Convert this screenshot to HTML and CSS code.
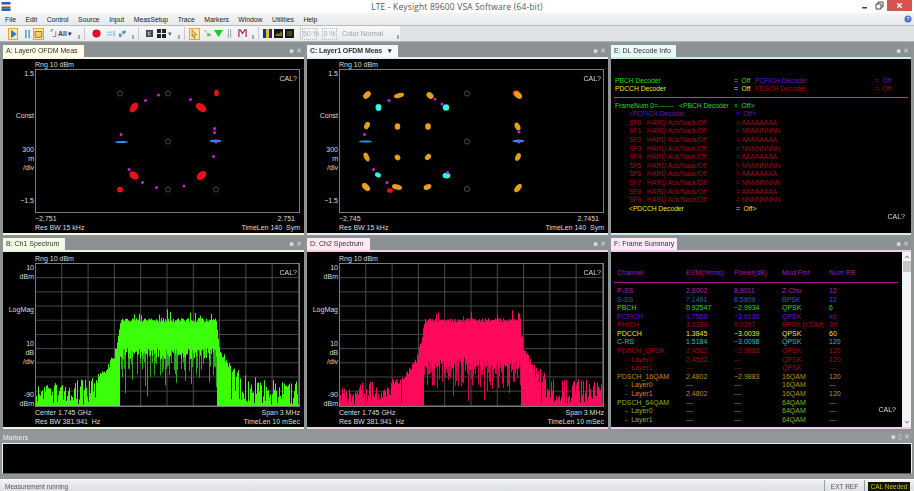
FILE: index.html
```html
<!DOCTYPE html>
<html lang="en">
<head>
<meta charset="utf-8">
<title>LTE - Keysight 89600 VSA Software (64-bit)</title>
<link rel="stylesheet" href="styles.css">
</head>
<body>
<div class="app">
  <header class="titlebar">
    <svg class="logo" viewBox="0 0 10 10"><rect width="10" height="3" fill="#2b5fa8"/><rect y="3" width="10" height="2" fill="#e8eef6"/><rect y="5" width="10" height="2" fill="#c8352c"/><rect y="7" width="10" height="3" fill="#2b5fa8"/></svg>
    <div class="title">LTE - Keysight 89600 VSA Software (64-bit)</div>
    <div class="winbtns">
      <svg class="winbtn" viewBox="0 0 14 11"><rect x="3" y="7" width="5" height="1.500" fill="#444"/></svg>
      <svg class="winbtn" viewBox="0 0 14 11"><path d="M3 4h5v5H3zM5 4V2h5v5H8" fill="none" stroke="#444"/></svg>
      <div class="closebtn"><svg viewBox="0 0 10 10"><path d="M2.500 2.500l5 5M7.500 2.500l-5 5" stroke="#fff" stroke-width="1.500"/></svg></div>
    </div>
  </header>

  <nav class="menubar">
    <span>File</span><span>Edit</span><span>Control</span><span>Source</span><span>Input</span><span>MeasSetup</span><span>Trace</span><span>Markers</span><span>Window</span><span>Utilities</span><span>Help</span>
    <svg class="help" viewBox="0 0 8 8"><circle cx="4" cy="4" r="3.500" fill="#4a6fd0"/><path d="M2.800 2.800q1.200-1 2.400 0L4 5" stroke="#fff" fill="none" stroke-width=".8"/></svg>
  </nav>

  <div class="toolbar">
    <div class="tools">
      <span class="tool hot"><svg viewBox="0 0 10 12"><path d="M2 1v10l7-5z" fill="#2c7fc8"/></svg></span>
      <span class="tool pause"><svg viewBox="0 0 8 12"><path d="M1 1h2v10H1zM5 1h2v10H5z" fill="#59a5d8"/></svg></span>
      <span class="tool hot wide"><svg viewBox="0 0 10 12"><path d="M1 3h8v7H1z" fill="#f4d068" stroke="#7c6a3a"/></svg></span>
      <svg class="ico sel" viewBox="0 0 8 12"><path d="M1 1h3M1 1v3M7 3v7H3" fill="none" stroke="#666"/></svg>
      <span class="tb-text">All</span><span class="drop">▾</span><span class="over"></span>
      <i class="sep"></i>
      <svg class="ico rec" viewBox="0 0 10 10"><circle cx="5" cy="5" r="4.500" fill="#e01020"/></svg>
      <svg class="ico mid" viewBox="0 0 10 10"><path d="M0 3h6v1H0zM0 6h6v1H0z" fill="#6aa8d8"/><path d="M7 2h2v6H7z" fill="#b8c0c8"/></svg>
      <svg class="ico mid" viewBox="0 0 10 10"><path d="M1 5h3v4H1zM4 3l4-2 1 3-3 2z" fill="#5f93c0"/></svg>
      <span class="over"></span>
      <i class="sep"></i>
      <svg class="ico box" viewBox="0 0 8 8"><rect width="8" height="8" fill="#444"/><path d="M5.500 2.500h-3v3h3" fill="none" stroke="#ddd"/></svg>
      <svg class="ico grid4" viewBox="0 0 9 9"><path d="M0 0h4v4H0zM5 0h4v4H5zM0 5h4v4H0zM5 5h4v4H5z" fill="#222"/></svg>
      <span class="drop small">▾</span><span class="over"></span>
      <i class="sep"></i>
      <span class="tool hot wide"><svg viewBox="0 0 10 12"><path d="M2 1l6 6H5l1 4-2 0-1-4-1 2z" fill="#f0d060" stroke="#8a7020" stroke-width=".7"/></svg></span>
      <svg class="ico mid" viewBox="0 0 9 10"><path d="M1 1l3 3" stroke="#888"/><path d="M4 5h4v3H4z" fill="#7ab070"/></svg>
      <svg class="ico mid" viewBox="0 0 10 10"><path d="M0 1h10L5 9z" fill="#1ec81e"/></svg>
      <svg class="ico thin" viewBox="0 0 6 10"><path d="M1 0h1v10H1zM4 0h1v10H4z" fill="#8a8f90"/></svg>
      <svg class="ico mid" viewBox="0 0 10 10"><path d="M1 9V1h1.500L5 5l2.500-4H9v8" fill="none" stroke="#b02838" stroke-width="1.300"/></svg>
      <span class="over"></span>
      <i class="sep"></i>
      <svg class="ico mid" viewBox="0 0 9 9"><rect width="9" height="9" fill="#1a2a90"/><path d="M3 0h3v9H3z" fill="#e0c020"/></svg>
      <svg class="ico mid" viewBox="0 0 9 9"><rect width="9" height="9" fill="#181818"/><path d="M1 7l2-3 2 1 3-3v5z" fill="#807818"/></svg>
      <svg class="ico mid" viewBox="0 0 9 9"><rect width="9" height="9" fill="#181810"/><path d="M2 2h5v5H2z" fill="#484818"/></svg>
      <i class="sep near"></i>
      <span class="pct first">50 %</span><span class="pct">0 %</span>
      <span class="colormode">Color Normal</span><span class="over end"></span>
    </div>
  </div>

  <main class="workspace">
    <section class="panel a">
      <div class="strip"><span class="tab">A: Layer0 OFDM Meas</span><span class="ctl">▪ ✕</span></div>
      <div class="body plot">
        <div class="toplabel">Rng 10 dBm</div>
        <div class="yaxis"><span>1.5</span><span class="g33">Const</span><span class="g25">300</span><span>m</span><span>/div</span><span class="g24">−1.5</span></div>
        <div class="frame" data-const="A"><span class="cal">CAL?</span></div>
        <div class="xaxis">
          <div class="xrow inset"><span>−2.751</span><span>2.751</span></div>
          <div class="xrow"><span>Res BW 15 kHz</span><span>TimeLen 140&nbsp; Sym</span></div>
        </div>
      </div>
    </section>

    <section class="panel c">
      <div class="strip"><span class="tab">C: Layer1 OFDM Meas<b class="tabdrop">▾</b></span><span class="ctl">▪ ✕</span></div>
      <div class="body plot">
        <div class="toplabel">Rng 10 dBm</div>
        <div class="yaxis"><span>1.5</span><span class="g33">Const</span><span class="g25">300</span><span>m</span><span>/div</span><span class="g24">−1.5</span></div>
        <div class="frame" data-const="C"><span class="cal">CAL?</span></div>
        <div class="xaxis">
          <div class="xrow inset"><span>−2.745</span><span>2.7451</span></div>
          <div class="xrow"><span>Res BW 15 kHz</span><span>TimeLen 140&nbsp; Sym</span></div>
        </div>
      </div>
    </section>

    <section class="panel e">
      <div class="strip"><span class="tab">E: DL Decode Info</span><span class="ctl">▪ ✕</span></div>
      <div class="body decode">
        <div class="dline"><span class="green c1">PBCH Decoder</span><span class="green eq">= &nbsp;Off</span><span class="purple c3">PCFICH Decoder</span><span class="purple">= &nbsp;Off</span></div>
        <div class="dline"><span class="yellow c1">PDCCH Decoder</span><span class="yellow eq">= &nbsp;Off</span><span class="red c3">PDSCH Decoder</span><span class="red">= &nbsp;Off</span></div>
        <hr class="teal">
        <div class="dline green"><span class="c1">FrameNum 0=------- &nbsp; &lt;PBCH Decoder</span><span class="eq">= &nbsp;Off&gt;</span></div>
        <div class="dline purple ind"><span class="c1b">&lt;PCFICH Decoder</span><span>= &nbsp;Off&gt;</span></div>
        <div class="dline red ind"><span class="c1b">SF0 &nbsp; HARQ Ack/Nack/Off</span><span>= AAAAAAAA</span></div>
        <div class="dline red ind"><span class="c1b">SF1 &nbsp; HARQ Ack/Nack/Off</span><span>= NNNNNNNN</span></div>
        <div class="dline red ind"><span class="c1b">SF2 &nbsp; HARQ Ack/Nack/Off</span><span>= AAAAAAAA</span></div>
        <div class="dline red ind"><span class="c1b">SF3 &nbsp; HARQ Ack/Nack/Off</span><span>= NNNNNNNN</span></div>
        <div class="dline red ind"><span class="c1b">SF4 &nbsp; HARQ Ack/Nack/Off</span><span>= AAAAAAAA</span></div>
        <div class="dline red ind"><span class="c1b">SF5 &nbsp; HARQ Ack/Nack/Off</span><span>= NNNNNNNN</span></div>
        <div class="dline red ind"><span class="c1b">SF6 &nbsp; HARQ Ack/Nack/Off</span><span>= AAAAAAAA</span></div>
        <div class="dline red ind"><span class="c1b">SF7 &nbsp; HARQ Ack/Nack/Off</span><span>= NNNNNNNN</span></div>
        <div class="dline red ind"><span class="c1b">SF8 &nbsp; HARQ Ack/Nack/Off</span><span>= AAAAAAAA</span></div>
        <div class="dline red ind"><span class="c1b">SF9 &nbsp; HARQ Ack/Nack/Off</span><span>= NNNNNNNN</span></div>
        <div class="dline yellow ind"><span class="c1b">&lt;PDCCH Decoder</span><span>= &nbsp;Off&gt;</span></div>
        <span class="cal">CAL?</span>
      </div>
    </section>

    <section class="panel b">
      <div class="strip"><span class="tab">B: Ch1 Spectrum</span><span class="ctl">▪ ✕</span></div>
      <div class="body plot">
        <div class="toplabel">Rng 10 dBm</div>
        <div class="yaxis"><span>10</span><span>dBm</span><span class="g24">LogMag</span><span class="g25">10</span><span>dB</span><span>/div</span><span class="g24">-90</span><span>dBm</span></div>
        <div class="frame gridded"><canvas class="trace" data-color="#3cff0a" data-dim="#2aa818" data-seed="7" data-floor="90" width="263" height="142"></canvas><span class="cal">CAL?</span></div>
        <div class="xaxis">
          <div class="xrow"><span>Center 1.745 GHz</span><span>Span 3 MHz</span></div>
          <div class="xrow"><span>Res BW 381.941&nbsp; Hz</span><span>TimeLen 10 mSec</span></div>
        </div>
      </div>
    </section>

    <section class="panel d">
      <div class="strip"><span class="tab">D: Ch2 Spectrum</span><span class="ctl">▪ ✕</span></div>
      <div class="body plot">
        <div class="toplabel">Rng 10 dBm</div>
        <div class="yaxis"><span>10</span><span>dBm</span><span class="g24">LogMag</span><span class="g25">10</span><span>dB</span><span>/div</span><span class="g24">-90</span><span>dBm</span></div>
        <div class="frame gridded"><canvas class="trace" data-color="#ff0a5c" data-dim="#d00a4c" data-seed="23" data-floor="100" width="263" height="142"></canvas><span class="cal">CAL?</span></div>
        <div class="xaxis">
          <div class="xrow"><span>Center 1.745 GHz</span><span>Span 3 MHz</span></div>
          <div class="xrow"><span>Res BW 381.941&nbsp; Hz</span><span>TimeLen 10 mSec</span></div>
        </div>
      </div>
    </section>

    <section class="panel f">
      <div class="strip"><span class="tab">F: Frame Summary</span><span class="ctl">▪ ✕</span></div>
      <div class="fbody">
        <div class="body summary">
          <div class="srow head"><span>Channel</span><span>EVM(%rms)</span><span>Power(dB)</span><span>Mod Fmt</span><span>Num RB</span></div>
          <hr class="mag">
          <div class="srow magenta"><span>P-SS</span><span>2.6002</span><span>8.9011</span><span>Z-Chu</span><span>12</span></div>
          <div class="srow blue"><span>S-SS</span><span>7.1491</span><span>8.5909</span><span>BPSK</span><span>12</span></div>
          <div class="srow green"><span>PBCH</span><span>0.92547</span><span>−2.9934</span><span>QPSK</span><span>6</span></div>
          <div class="srow purple"><span>PCFICH</span><span>1.7568</span><span>−3.0130</span><span>QPSK</span><span>40</span></div>
          <div class="srow red"><span>PHICH</span><span>1.1289</span><span>9.0297</span><span>BPSK (CDM)</span><span>30</span></div>
          <div class="srow yellow"><span>PDCCH</span><span>1.3845</span><span>−3.0039</span><span>QPSK</span><span>60</span></div>
          <div class="srow cyan"><span>C-RS</span><span>1.5184</span><span>−3.0098</span><span>QPSK</span><span>120</span></div>
          <div class="srow red"><span>PDSCH_QPSK</span><span>2.4582</span><span>−2.9883</span><span>QPSK</span><span>120</span></div>
          <div class="srow red"><span class="sub">-&nbsp; Layer0</span><span>2.4582</span><span>---</span><span>QPSK</span><span>120</span></div>
          <div class="srow red"><span class="sub">-&nbsp; Layer1</span><span>---</span><span>---</span><span>QPSK</span><span>---</span></div>
          <div class="srow orange"><span>PDSCH_16QAM</span><span>2.4802</span><span>−2.9883</span><span>16QAM</span><span>120</span></div>
          <div class="srow orange"><span class="sub">-&nbsp; Layer0</span><span>---</span><span>---</span><span>16QAM</span><span>---</span></div>
          <div class="srow orange"><span class="sub">-&nbsp; Layer1</span><span>2.4802</span><span>---</span><span>16QAM</span><span>120</span></div>
          <div class="srow olive"><span>PDSCH_64QAM</span><span>---</span><span>---</span><span>64QAM</span><span>---</span></div>
          <div class="srow olive"><span class="sub">-&nbsp; Layer0</span><span>---</span><span>---</span><span>64QAM</span><span>---</span></div>
          <div class="srow olive"><span class="sub">-&nbsp; Layer1</span><span>---</span><span>---</span><span>64QAM</span><span>---</span></div>
          <span class="cal">CAL?</span>
        </div>
        <div class="scrollbar">
          <svg viewBox="0 0 7 5"><path d="M1 4l2.500-3L6 4" fill="none" stroke="#555"/></svg>
          <i class="thumb"></i>
          <svg class="down" viewBox="0 0 7 5"><path d="M1 1l2.500 3L6 1" fill="none" stroke="#555"/></svg>
        </div>
      </div>
    </section>
  </main>

  <section class="markers">
    <div class="mstrip"><span>Markers</span><span class="ctl">▪ ▯ ✕</span></div>
    <div class="mbody"></div>
  </section>

  <footer class="status">
    <span class="stext">Measurement running</span>
    <span class="extref">EXT REF</span>
    <span class="calneed">CAL Needed</span>
  </footer>
</div>
<script src="plots.js"></script>
</body>
</html>
```
FILE: styles.css
```css
* { box-sizing: border-box; }
html, body { margin: 0; height: 100%; }
body { font-family: "Liberation Sans", Arial, sans-serif; background: #8f9495; overflow: hidden; }
.app { width: 914px; height: 491px; display: flex; flex-direction: column; background: #8f9495; filter: blur(.35px); }

/* Title bar */
.titlebar { height: 13px; background: #fff; display: flex; align-items: center; position: relative; flex: none; }
.logo { width: 10px; height: 9px; margin-left: 1px; }
.title { flex: 1; text-align: center; font: 8.400px "Open Sans", sans-serif; color: #555; padding-left: 44px; letter-spacing: .2px; }
.winbtns { display: flex; align-items: flex-start; height: 13px; margin-right: 2px; }
.winbtn { width: 14px; height: 11px; }
.closebtn { width: 25px; height: 11px; background: #d9534f; display: flex; align-items: center; justify-content: center; }
.closebtn svg { width: 9px; height: 9px; }

/* Menu */
.menubar { height: 13px; flex: none; display: flex; align-items: center; gap: 9.500px; padding: 0 2px 0 5px; font-size: 6.800px; color: #222; background: linear-gradient(#f3f4f5, #e7e9ea); border-bottom: 1px solid #b8bcbe; }
.help { width: 8px; height: 8px; margin-left: auto; }

/* Toolbar */
.toolbar { height: 16px; flex: none; background: #dfe2e4; border-bottom: 1px solid #aeb2b4; }
.tools { width: 400px; height: 15px; display: flex; align-items: center; padding-left: 8px; background: linear-gradient(#f7f8f9, #e9ebec); color: #333; }
.tool { width: 10px; height: 12px; display: flex; align-items: center; justify-content: center; margin-right: 4px; flex: none; }
.tool svg { width: 9px; height: 10px; }
.tool.pause { margin-right: 1px; }
.tool.hot { background: #fde9a9; outline: 1px solid #e2a93a; outline-offset: -1px; }
.tool.wide { width: 11px; margin-right: 3px; }
.ico { height: 9px; width: 9px; flex: none; margin-right: 2px; }
.ico.sel { width: 7px; margin-left: 3px; margin-right: 1px; }
.ico.rec { margin-left: 3px; margin-right: 6px; }
.ico.box { width: 7px; height: 7px; margin-left: 3px; margin-right: 4px; }
.ico.thin { width: 5px; margin: 0 6px 0 2px; }
.tb-text { font-size: 7px; width: 9px; font-weight: bold; color: #444; flex: none; }
.drop { font-size: 7px; width: 7px; margin-left: 1px; color: #222; flex: none; }
.drop.small { margin-left: 0; color: #666; }
.over { width: 2px; height: 4px; align-self: flex-end; margin: 0 3px 2px 3px; background: #a5a9ab; flex: none; }
.over.end { margin-left: 9px; }
.sep { width: 1px; height: 13px; background: #c8cccf; margin: 0 4px 0 1px; flex: none; }
.sep.near { margin: 0 1px 0 4px; }
.pct { font-size: 7px; height: 12px; line-height: 10px; width: 15px; text-align: center; color: #aaa; border: 1px dotted #bbb; flex: none; white-space: nowrap; }
.pct.first { margin-right: 5px; }
.colormode { font-size: 7px; color: #9a9ea0; margin-left: 5px; width: 46px; white-space: nowrap; flex: none; }

/* Workspace */
.workspace { flex: none; padding: 2px 3px 0; display: grid; grid-template-columns: 301px 301px 300px; grid-template-rows: 191px 192px; column-gap: 3px; row-gap: 2px; }
.panel { display: flex; flex-direction: column; min-width: 0; --accent: #fff; border-bottom: 2px solid var(--accent); }
.strip { height: 13px; flex: none; display: flex; justify-content: space-between; align-items: flex-end; background: #8c9293; }
.tab { height: 12px; line-height: 12px; padding: 0 3px; font-size: 7px; color: #333; display: block; white-space: nowrap; }
.ctl { font: 7px "DejaVu Sans", sans-serif; color: #d9dcdc; height: 11px; line-height: 11px; padding-right: 2px; }
.body { background: #000; flex: 1; position: relative; color: #ddd; font-size: 7px; }
.panel .body, .fbody { border-top: 2px solid var(--accent); }
.fbody .body { border-top: 0; }
.a { --accent: #fbf7da; } .a .tab { background: #fffde9; width: 81px; }
.c { --accent: #e4f0fa; } .c .tab { background: #f3f9ff; width: 91px; font-weight: bold; letter-spacing: -.1px; }
.e { --accent: #c6efe9; } .e .tab { background: #e9fbf8; width: 65px; }
.b { --accent: #e9f6d7; } .b .tab { background: #f3fbe8; width: 62px; }
.d { --accent: #f9cfe0; } .d .tab { background: #ffe9f2; width: 63px; }
.f { --accent: #f3cdf1; } .f .tab { background: #fce8fb; width: 66px; }
.tabdrop { font-size: 7px; margin-left: 6px; }

/* Plots */
.plot { display: grid; grid-template-columns: 32px 265px; grid-template-rows: 1fr 144px 20px; }
.toplabel { grid-column: 2; align-self: end; line-height: 9px; white-space: nowrap; }
.yaxis { grid-column: 1; grid-row: 2; display: flex; flex-direction: column; align-items: flex-end; padding-right: 1px; line-height: 9px; white-space: nowrap; }
.g24 { margin-top: 24px; } .g25 { margin-top: 25px; } .g33 { margin-top: 33px; }
.frame { grid-column: 2; grid-row: 2; position: relative; border: 1px solid #7c7c7c; background: #000; overflow: hidden; }
.frame svg, .frame canvas { display: block; width: 100%; height: 100%; }
.gridded { background-image: linear-gradient(#4a4a4a 1px, transparent 1px), linear-gradient(90deg, #4a4a4a 1px, transparent 1px); background-size: 10% 10%; background-position: -1px -1px; }
.cal { position: absolute; top: 4px; right: 2px; line-height: 9px; color: #ddd; font-size: 7px; }
.xaxis { grid-column: 2; grid-row: 3; line-height: 9px; padding-top: 1px; }
.xrow { display: flex; justify-content: space-between; white-space: nowrap; }
.xrow.inset { padding-right: 5px; }

/* Decode */
.decode { padding: 17.500px 3px 0 4px; font-size: 6.700px; }
.decode .cal { top: auto; bottom: 12px; right: 6px; font-size: 7px; }
.dline { display: flex; height: 8.600px; line-height: 8.600px; white-space: nowrap; }
.c1 { width: 119px; flex: none; } .c1b { width: 107px; flex: none; } .eq { width: 21px; flex: none; } .c3 { width: 120px; flex: none; }
.ind { padding-left: 14px; }
.teal { margin: 3px 0 4px -1px; height: 1px; border: 0; background: #1c8f94; }
.green { color: #22dd22; } .yellow { color: #e8e832; } .red { color: #a00c18; } .purple { color: #6414cc; }
.magenta { color: #b020b0; } .blue { color: #1266b8; } .cyan { color: #20c0c0; } .orange { color: #c08c1c; } .olive { color: #88b420; }

/* Summary */
.fbody { flex: 1; display: flex; min-height: 0; }
.summary { padding: 17px 0 0 6px; font-size: 7px; }
.srow { display: grid; grid-template-columns: 69px 48px 48px 47px 1fr; height: 8.580px; line-height: 8.580px; white-space: nowrap; }
.srow.head { color: #a418a4; height: 8px; line-height: 8px; }
.sub { padding-left: 8px; }
.mag { height: 1px; border: 0; background: #a418a4; margin: 5px 0 4px -3px; width: 284px; }
.summary .cal { top: auto; bottom: 13px; right: 6px; font-size: 7px; }
.scrollbar { width: 9px; flex: none; background: #f3f3f5; display: flex; flex-direction: column; align-items: center; padding: 3px 0; position: relative; }
.scrollbar svg { width: 6px; height: 4px; flex: none; }
.thumb { width: 8px; height: 11px; background: #c4c6c8; margin-top: 2px; }
.down { margin-top: auto; }

/* Markers */
.markers { flex: none; margin: 2px 2px 0; height: 45px; display: flex; flex-direction: column; }
.mstrip { height: 12px; flex: none; display: flex; justify-content: space-between; align-items: center; font-size: 7px; color: #eee; padding-left: 1px; background: #92979a; }
.mbody { height: 31px; background: #000; border: 1px solid #eef0f0; border-bottom-color: #5a5e60; }

/* Status */
.status { margin-top: 3px; flex: 1; display: flex; align-items: center; font-size: 6.500px; color: #555; background: linear-gradient(#f1f2f4, #d8dbe0); border-top: 1px solid #fff; padding: 0 4px 0 5px; }
.stext { flex: 1; }
.extref { width: 41px; height: 100%; line-height: 13px; text-align: center; border-left: 1px solid #9a9da0; border-right: 1px solid #9a9da0; margin-right: 3px; }
.calneed { width: 42px; height: 9px; line-height: 9px; text-align: center; background: #141408; color: #c8c020; }
```
FILE: plots.js
```js
// Deterministic drawing of the measured traces: constellations (SVG) and spectra (canvas).
(function () {
  var NS = 'http://www.w3.org/2000/svg';
  var RED = '#ee1018', ORG = '#e4a018', CYAN = '#38f0e4', BLUE = '#2a90ff', MAG = '#d020d8';
  var data = {
    A: {
      rings: [[84, 23.500], [132, 23.500], [132, 71.500], [180, 119.500], [132, 119.500]],
      blobs: [
        [RED, 180.500, 23, 2, 2.800, 0], [RED, 98, 37.500, 3, 4.800, 35], [RED, 165, 37.500, 5, 3.200, 35],
        [RED, 98, 105.500, 4.500, 3.200, 40], [RED, 165.500, 105.500, 4.800, 3.200, -40], [RED, 84, 119.500, 2.500, 2.500, 0],
        [BLUE, 85.500, 72, 6.500, 1, 0], [BLUE, 179.500, 71, 6, 1.400, 0]
      ],
      dots: [[109.500, 30.500], [122.500, 25], [154.500, 29.500], [178.500, 58.500], [178.500, 62.500], [85, 64.500], [177.500, 86.500], [93, 99.500], [106.500, 112.500], [120.500, 117.500], [148, 116], [180, 72]]
    },
    C: {
      rings: [[127, 23.500], [127, 71.500], [127, 119]],
      blobs: [
        [RED, 176, 23, 3, 2.500, 0], [RED, 50, 120.500, 2.500, 2, 0],
        [ORG, 27, 25, 3.800, 2.600, -45], [ORG, 59, 25.500, 4.500, 2, -15], [ORG, 90, 25.500, 3.400, 2.500, 40], [ORG, 178, 25, 4, 2.600, 40],
        [ORG, 27, 55.500, 3.400, 2.300, -65], [ORG, 57.500, 56.500, 2.800, 2.400, 90], [ORG, 88, 56.500, 2.800, 2.500, 90], [ORG, 177.500, 56.500, 3.500, 2.300, 65],
        [ORG, 26.500, 87, 4, 2.200, 65], [ORG, 57.500, 87.500, 2.600, 2.300, 40], [ORG, 88, 87, 3, 2.300, -45], [ORG, 178, 87, 3.500, 2.200, -65],
        [ORG, 26, 117, 4.200, 2.600, 45], [ORG, 57, 117, 4.500, 2.300, 15], [ORG, 87.500, 117, 3.500, 2.300, -25], [ORG, 178, 118, 4.200, 2.300, -50],
        [CYAN, 38.500, 37.500, 2.600, 3, 0], [CYAN, 106, 37.500, 2.800, 2.800, 0], [CYAN, 38, 105, 2.800, 2, 30], [CYAN, 106.500, 105.500, 3.400, 2.500, 0],
        [BLUE, 25.500, 71.500, 6.500, 1, 0], [BLUE, 178.500, 71, 6, 1.400, 0]
      ],
      dots: [[49, 30.500], [95, 29], [102, 34], [179, 62], [24.500, 64.500], [33.500, 99.500], [47, 112.500], [107.500, 102.500], [179, 72]]
    }
  };

  function el(parent, name, attrs) {
    var n = document.createElementNS(NS, name);
    for (var k in attrs) n.setAttribute(k, attrs[k]);
    parent.appendChild(n);
    return n;
  }

  document.querySelectorAll('[data-const]').forEach(function (frame) {
    var d = data[frame.dataset.const];
    var svg = document.createElementNS(NS, 'svg');
    svg.setAttribute('viewBox', '0 0 263 142');
    frame.insertBefore(svg, frame.firstChild);
    d.rings.forEach(function (p) {
      el(svg, 'circle', { cx: p[0], cy: p[1], r: 2.600, fill: 'none', stroke: '#555', 'stroke-width': 0.900 });
    });
    d.blobs.forEach(function (b) {
      var grow = b[0] === BLUE ? 1 : 1.150;
      el(svg, 'ellipse', { cx: b[1], cy: b[2], rx: b[3] * grow, ry: b[4] * grow, fill: b[0], transform: 'rotate(' + b[5] + ' ' + b[1] + ' ' + b[2] + ')' });
    });
    d.dots.forEach(function (p) {
      el(svg, 'circle', { cx: p[0], cy: p[1], r: 1.500, fill: MAG });
    });
  });

  function lerp(pts, x) {
    for (var i = 1; i < pts.length; i++) {
      if (x <= pts[i][0]) {
        var a = pts[i - 1], b = pts[i];
        return a[1] + (b[1] - a[1]) * (x - a[0]) / (b[0] - a[0]);
      }
    }
    return pts[pts.length - 1][1];
  }

  var envelope = [[0, 122], [40, 116], [58, 114], [70, 102], [78, 88], [82, 66], [85, 58], [180, 58], [184, 84], [198, 104], [215, 112], [264, 118]];

  document.querySelectorAll('canvas.trace').forEach(function (cv) {
    var seed = +cv.dataset.seed;
    var floor = +cv.dataset.floor;
    function rnd() {
      seed = (seed * 1664525 + 1013904223) % 4294967296;
      return seed / 4294967296;
    }
    var g = cv.getContext('2d'), H = cv.height;
    for (var x = 0; x < cv.width; x++) {
      var top = lerp(envelope, x), t, b, r = rnd();
      if (x >= 84 && x < 181) {
        // In-band: a solid core, with dim stems reaching below it.
        t = top - rnd() * 4 - (rnd() > 0.920 ? 4 + rnd() * 5 : 0);
        b = floor + (rnd() - 0.500) * 12;
        g.fillStyle = cv.dataset.dim;
        if (r > 0.350) g.fillRect(x, b - 1, 1, 6 + rnd() * (r > 0.850 ? 38 : 18));
        g.fillStyle = cv.dataset.color;
        g.fillRect(x, t, 1, b - t);
      } else {
        // Shoulders are filled to the floor; beyond them it thins to sparse noise.
        var edge = x < 84 ? (x - 50) / 18 : (204 - x) / 14;
        var fill = Math.max(0, Math.min(1, edge));
        g.fillStyle = cv.dataset.color;
        if (rnd() < fill) {
          t = top + rnd() * 8;
        } else {
          t = top + Math.pow(rnd(), 1.300) * (H - top) * 0.950;
        }
        g.fillRect(x, t, 1, H - t);
      }
    }
  });
})();
```
